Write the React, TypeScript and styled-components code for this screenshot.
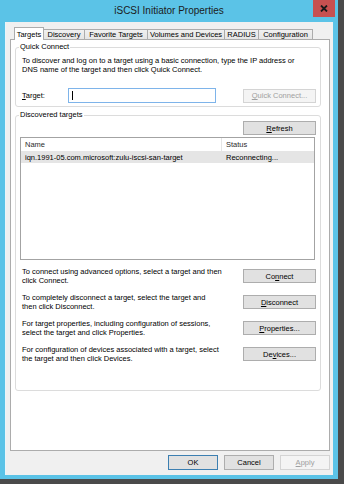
import React from "react";
import styled, { createGlobalStyle } from "styled-components";

const GlobalStyle = createGlobalStyle`
  html, body {
    margin: 0;
    padding: 0;
    background: #4a4a4a;
    width: 344px;
    height: 484px;
    overflow: hidden;
  }
  * {
    box-sizing: border-box;
  }
`;

const FONT = `"Liberation Sans", Arial, sans-serif`;

const tabs = [
  { label: "Targets", width: 30 },
  { label: "Discovery", width: 42 },
  { label: "Favorite Targets", width: 64 },
  { label: "Volumes and Devices", width: 78 },
  { label: "RADIUS", width: 35 },
  { label: "Configuration", width: 55 },
];

const Window = styled.div`
  width: 338px;
  height: 479px;
  background: #5bc3e7;
  display: flex;
  flex-direction: column;
  padding: 0 5px 4px 5px;
  font-family: ${FONT};
  font-size: 7.5px;
  color: #000;
`;

const TitleBar = styled.div`
  height: 22px;
  display: grid;
  grid-template-columns: 1fr auto 1fr;
  align-items: start;
`;

const Title = styled.div`
  grid-column: 2;
  font-size: 10px;
  line-height: 22px;
  color: #1b1b1b;
  white-space: nowrap;
`;

const CloseButton = styled.div`
  grid-column: 3;
  justify-self: end;
  margin-right: -2px;
  width: 22px;
  height: 17px;
  background: #c75050;
  display: flex;
  align-items: center;
  justify-content: center;
`;

const Client = styled.div`
  flex: 1;
  background: #f0f0f0;
  border-left: 1px solid #e9f6fb;
  display: flex;
  flex-direction: column;
  padding: 5px 3px 5px 4px;
`;

const TabStrip = styled.div`
  display: flex;
  align-items: flex-end;
  height: 12px;
  padding-left: 4px;
`;

const Tab = styled.div<{ $active?: boolean; $w: number }>`
  width: ${(p) => p.$w}px;
  height: ${(p) => (p.$active ? 13 : 10)}px;
  margin-left: -1px;
  margin-bottom: ${(p) => (p.$active ? -1 : 0)}px;
  position: relative;
  z-index: ${(p) => (p.$active ? 2 : 1)};
  border: 1px solid #acacac;
  border-bottom: none;
  background: ${(p) =>
    p.$active ? "#ffffff" : "linear-gradient(#f0f0f0, #e5e5e5)"};
  display: flex;
  align-items: ${(p) => (p.$active ? "flex-start" : "center")};
  padding-top: ${(p) => (p.$active ? 2 : 0)}px;
  justify-content: center;
  white-space: nowrap;
  line-height: 9px;
  &:first-child {
    margin-left: 0;
  }
`;

const Panel = styled.div`
  flex: 1;
  background: #fff;
  border: 1px solid #acacac;
  display: flex;
  flex-direction: column;
  padding: 2px 8px 0 4px;
`;

const Group = styled.fieldset<{ $top: number; $bottom: number }>`
  margin: 0;
  border: 1px solid #dcdcdc;
  border-radius: 3px;
  padding: ${(p) => p.$top}px 4px ${(p) => p.$bottom}px 6px;
  & + & {
    margin-top: 3px;
  }
`;

const Legend = styled.legend`
  padding: 0 1px;
  margin-left: -3px;
  line-height: 10px;
`;

const Text = styled.div`
  line-height: 9px;
  white-space: nowrap;
`;

const TargetRow = styled.div`
  margin-top: 14px;
  display: flex;
  align-items: center;
`;

const Label = styled.div`
  width: 46px;
`;

const TextBox = styled.div`
  width: 148px;
  height: 15px;
  border: 1px solid #7eb4ea;
  background: #fff;
  display: flex;
  align-items: center;
  padding-left: 3px;
`;

const Caret = styled.div`
  width: 1px;
  height: 9px;
  background: #000;
`;

const Button = styled.div<{ $w?: number; $h?: number; $kind?: "default" | "disabled" }>`
  width: ${(p) => p.$w ?? 73}px;
  height: ${(p) => p.$h ?? 14}px;
  flex-shrink: 0;
  display: flex;
  align-items: center;
  justify-content: center;
  white-space: nowrap;
  background: ${(p) => (p.$kind === "disabled" ? "#f4f4f4" : "#e1e1e1")};
  border: 1px solid
    ${(p) =>
      p.$kind === "disabled"
        ? "#d4d4d4"
        : p.$kind === "default"
        ? "#3c7fb1"
        : "#adadad"};
  color: ${(p) => (p.$kind === "disabled" ? "#a0a0a0" : "#000")};
`;

const PushRight = styled.div`
  margin-left: auto;
`;

const Key = styled.span`
  text-decoration: underline;
`;

const RefreshRow = styled.div`
  margin-top: 1px;
  display: flex;
  justify-content: flex-end;
`;

const List = styled.div`
  margin: 2px 1px 0 -2px;
  height: 123px;
  border: 1px solid #a3a3a3;
  background: #fff;
`;

const ListRow = styled.div<{ $header?: boolean }>`
  display: grid;
  grid-template-columns: 201px 1fr;
  height: ${(p) => (p.$header ? 13 : 12)}px;
  align-items: center;
  background: ${(p) => (p.$header ? "#fff" : "#e5e5e5")};
  color: ${(p) => (p.$header ? "#2b2b2b" : "#000")};
`;

const Cell = styled.div<{ $divider?: boolean }>`
  height: 100%;
  display: flex;
  align-items: center;
  padding-left: 4px;
  white-space: nowrap;
  border-right: ${(p) => (p.$divider ? "1px solid #e5e5e5" : "none")};
`;

const Actions = styled.div`
  margin-top: 7px;
  display: flex;
  flex-direction: column;
  gap: 8px;
`;

const ActionRow = styled.div`
  display: flex;
  align-items: center;
  justify-content: space-between;
  height: 18px;
`;

const DialogButtons = styled.div`
  margin-top: 4px;
  display: flex;
  justify-content: flex-end;
  gap: 6px;
`;

const actions = [
  {
    lines: ["To connect using advanced options, select a target and then", "click Connect."],
    button: (
      <>
        Co<Key>n</Key>nect
      </>
    ),
  },
  {
    lines: ["To completely disconnect a target, select the target and", "then click Disconnect."],
    button: (
      <>
        <Key>D</Key>isconnect
      </>
    ),
  },
  {
    lines: [
      "For target properties, including configuration of sessions,",
      "select the target and click Properties.",
    ],
    button: (
      <>
        <Key>P</Key>roperties...
      </>
    ),
  },
  {
    lines: [
      "For configuration of devices associated with a target, select",
      "the target and then click Devices.",
    ],
    button: (
      <>
        De<Key>v</Key>ices...
      </>
    ),
  },
];

export default function App() {
  return (
    <>
      <GlobalStyle />
      <Window>
        <TitleBar>
          <Title>iSCSI Initiator Properties</Title>
          <CloseButton>
            <svg width="8" height="7" viewBox="0 0 8 7">
              <path d="M1 0.5 L7 6.5 M7 0.5 L1 6.5" stroke="#1a1a1a" strokeWidth="1.8" />
            </svg>
          </CloseButton>
        </TitleBar>
        <Client>
          <TabStrip>
            {tabs.map((t, i) => (
              <Tab key={t.label} $w={t.width} $active={i === 0}>
                {t.label}
              </Tab>
            ))}
          </TabStrip>
          <Panel>
            <Group $top={4} $bottom={3}>
              <Legend>Quick Connect</Legend>
              <Text>
                To discover and log on to a target using a basic connection, type the IP address or
                <br />
                DNS name of the target and then click Quick Connect.
              </Text>
              <TargetRow>
                <Label>
                  <Key>T</Key>arget:
                </Label>
                <TextBox>
                  <Caret />
                </TextBox>
                <PushRight>
                  <Button $kind="disabled">
                    <Key>Q</Key>uick Connect...
                  </Button>
                </PushRight>
              </TargetRow>
            </Group>
            <Group $top={0} $bottom={27}>
              <Legend>Discovered targets</Legend>
              <RefreshRow>
                <Button>
                  <Key>R</Key>efresh
                </Button>
              </RefreshRow>
              <List>
                <ListRow $header>
                  <Cell $divider>Name</Cell>
                  <Cell>Status</Cell>
                </ListRow>
                <ListRow>
                  <Cell>iqn.1991-05.com.microsoft:zulu-iscsi-san-target</Cell>
                  <Cell>Reconnecting...</Cell>
                </ListRow>
              </List>
              <Actions>
                {actions.map((a) => (
                  <ActionRow key={a.lines[0]}>
                    <Text>
                      {a.lines[0]}
                      <br />
                      {a.lines[1]}
                    </Text>
                    <Button>{a.button}</Button>
                  </ActionRow>
                ))}
              </Actions>
            </Group>
          </Panel>
          <DialogButtons>
            <Button $w={50} $h={15} $kind="default">
              OK
            </Button>
            <Button $w={50} $h={15}>
              Cancel
            </Button>
            <Button $w={50} $h={15} $kind="disabled">
              <Key>A</Key>pply
            </Button>
          </DialogButtons>
        </Client>
      </Window>
    </>
  );
}
